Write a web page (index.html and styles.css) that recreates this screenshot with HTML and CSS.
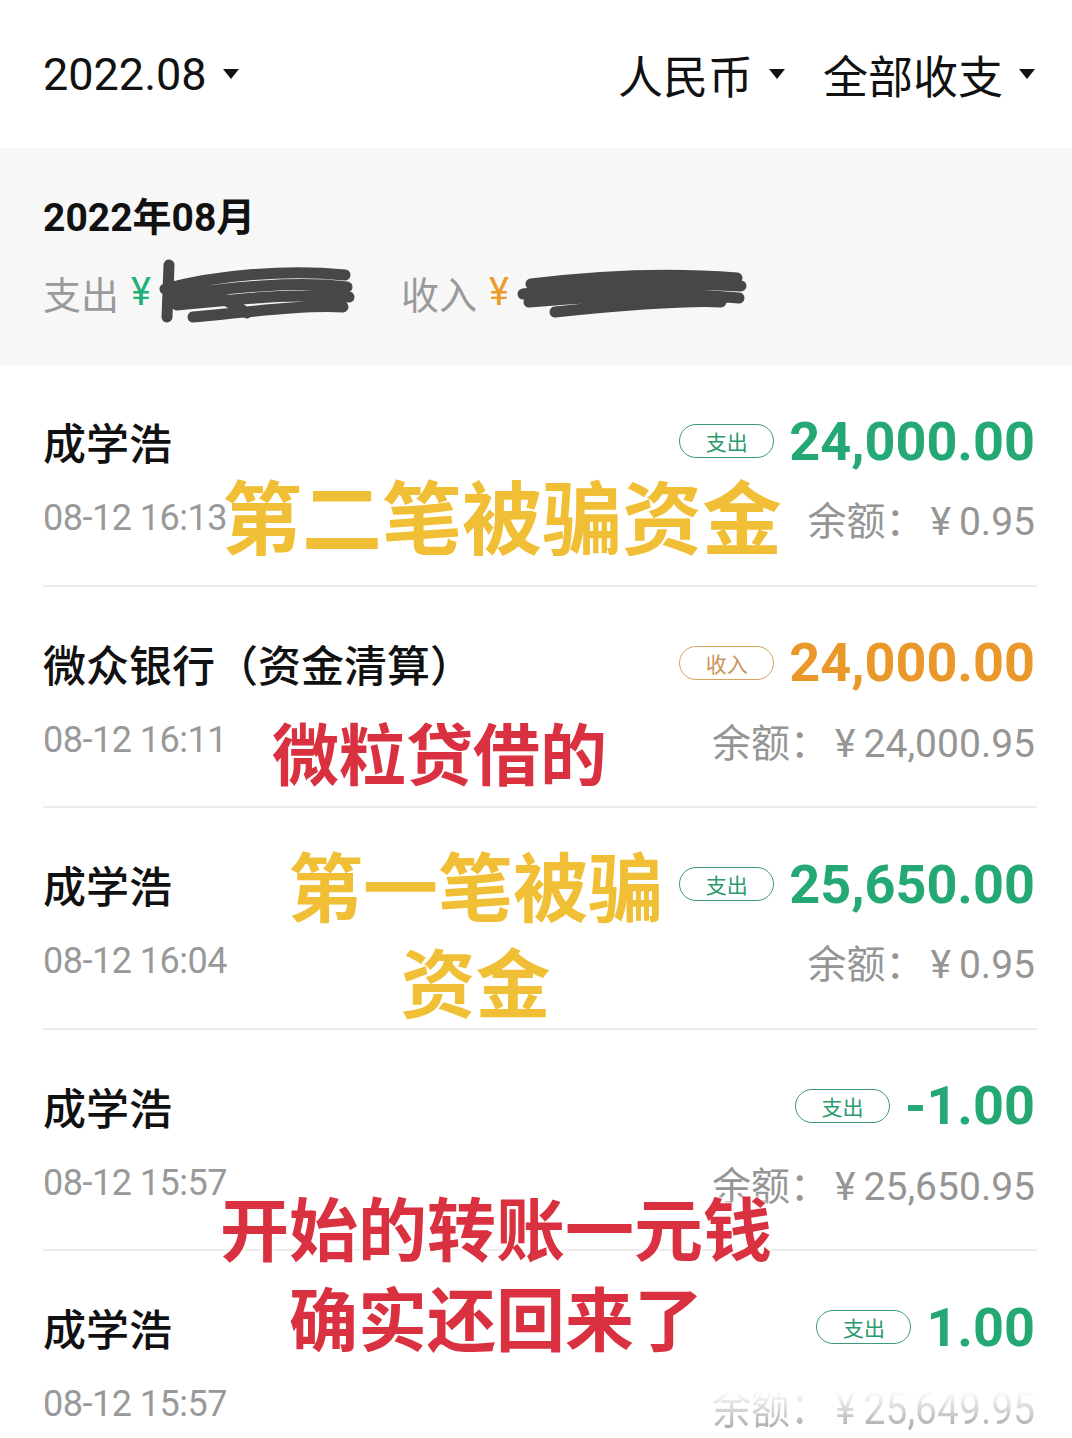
FILE: index.html
```html
<!DOCTYPE html>
<html lang="zh-CN">
<head>
    <meta charset="UTF-8">
    <meta name="viewport" content="width=device-width, initial-scale=1.0">
    <title>账单</title>
    <link rel="stylesheet" href="styles.css">
</head>
<body>

    <div class="topbar">
        <div class="pick">2022.08 <span class="caret"></span></div>
        <div class="filters">
            <div class="pick">人民币 <span class="caret"></span></div>
            <div class="pick">全部收支 <span class="caret"></span></div>
        </div>
    </div>

    <div class="month">
        <div class="month-title">2022年08月</div>
        <div class="month-sum">
            <span class="sum-label">支出</span>
            <span class="yen out">¥</span>
            <svg class="scribble" width="200" height="66" viewBox="0 0 200 66">
                <path d="M12 6 L10 58 M8 30 C60 16 130 10 188 16 M14 38 C70 28 140 22 190 28 M20 46 C80 40 140 34 192 38 M36 58 C100 52 150 46 186 48 M50 30 L90 54" fill="none" stroke="#474747" stroke-width="11" stroke-linecap="round"/>
            </svg>
            <span class="sum-label gap">收入</span>
            <span class="yen in">¥</span>
            <svg class="scribble" width="232" height="60" viewBox="0 0 232 60">
                <path d="M16 22 C80 14 150 10 222 16 M8 32 C80 24 160 20 226 24 M14 40 C90 34 160 30 224 36 M40 50 C100 44 170 38 206 40" fill="none" stroke="#474747" stroke-width="11" stroke-linecap="round"/>
            </svg>
        </div>
    </div>

    <div class="list">
        <div class="row">
            <div class="line">
                <span class="name">成学浩</span>
                <span class="money"><span class="tag out">支出</span><span class="amount out">24,000.00</span></span>
            </div>
            <div class="line">
                <span class="time">08-12 16:13</span>
                <span class="balance">余额：<span class="cur">¥</span>0.95</span>
            </div>
        </div>
        <div class="row">
            <div class="line">
                <span class="name">微众银行（资金清算）</span>
                <span class="money"><span class="tag in">收入</span><span class="amount in">24,000.00</span></span>
            </div>
            <div class="line">
                <span class="time">08-12 16:11</span>
                <span class="balance">余额：<span class="cur">¥</span>24,000.95</span>
            </div>
        </div>
        <div class="row">
            <div class="line">
                <span class="name">成学浩</span>
                <span class="money"><span class="tag out">支出</span><span class="amount out">25,650.00</span></span>
            </div>
            <div class="line">
                <span class="time">08-12 16:04</span>
                <span class="balance">余额：<span class="cur">¥</span>0.95</span>
            </div>
        </div>
        <div class="row">
            <div class="line">
                <span class="name">成学浩</span>
                <span class="money"><span class="tag out">支出</span><span class="amount out">-1.00</span></span>
            </div>
            <div class="line">
                <span class="time">08-12 15:57</span>
                <span class="balance">余额：<span class="cur">¥</span>25,650.95</span>
            </div>
        </div>
        <div class="row last">
            <div class="line">
                <span class="name">成学浩</span>
                <span class="money"><span class="tag out">支出</span><span class="amount out">1.00</span></span>
            </div>
            <div class="line">
                <span class="time">08-12 15:57</span>
                <span class="balance smear">余额：<span class="cur">¥</span>25,649.95</span>
            </div>
        </div>

        <!-- captions written over the screenshot -->
        <div class="note yellow note-1">第二笔被骗资金</div>
        <div class="note red note-2">微粒贷借的</div>
        <div class="note yellow note-3">第一笔被骗<br>资金</div>
        <div class="note red note-4">开始的转账一元钱<br>确实还回来了</div>
    </div>

</body>
</html>
```

FILE: styles.css
```css
body {
    margin: 0;
    background-color: #ffffff;
    font-family: Roboto, "Noto Sans CJK SC", sans-serif;
    color: #111111;
    overflow: hidden;
}
.topbar {
    height: 148px;
    padding: 0 37px 0 43px;
    display: flex;
    align-items: center;
    justify-content: space-between;
    box-sizing: border-box;
}
.filters {
    display: flex;
    gap: 38px;
}
.pick {
    font-size: 45px;
    display: flex;
    align-items: center;
    gap: 16px;
}
.caret {
    width: 0;
    height: 0;
    border-left: 8px solid transparent;
    border-right: 8px solid transparent;
    border-top: 10px solid #111111;
}
.month {
    background-color: #f7f7f7;
    height: 217px;
    padding: 0 43px;
    box-sizing: border-box;
    padding-top: 48px;
}
.month-title {
    font-size: 39px;
    font-weight: 700;
    line-height: 44px;
}
.month-sum {
    margin-top: 20px;
    display: flex;
    align-items: center;
    height: 64px;
}
.sum-label {
    font-size: 38px;
    color: #9a9a9a;
}
.sum-label.gap {
    margin-left: 44px;
}
.yen {
    font-size: 38px;
    margin-left: 12px;
}
.yen.out {
    color: #22b07a;
}
.yen.in {
    color: #eb9b2d;
}
.scribble {
    margin-left: 6px;
}
.list {
    position: relative;
}
.row {
    margin: 0 35px 0 43px;
    height: 221.5px;
    padding-top: 48px;
    box-sizing: border-box;
    border-bottom: 2px solid #ececec;
    display: flex;
    flex-direction: column;
    gap: 21px;
}
.row.last {
    border-bottom: none;
}
.line {
    height: 56px;
    display: flex;
    align-items: center;
    justify-content: space-between;
    padding-right: 2px;
}
.name {
    font-size: 43px;
    font-weight: 500;
    color: #111111;
}
.money {
    display: flex;
    align-items: center;
    gap: 15px;
}
.tag {
    height: 34px;
    width: 95px;
    box-sizing: border-box;
    border: 1.5px solid #2ba878;
    border-radius: 17px;
    display: flex;
    align-items: center;
    justify-content: center;
    font-size: 21px;
}
.tag.out {
    color: #2a9a6c;
    border-color: #3a9c74;
}
.tag.in {
    color: #c9955a;
    border-color: #d5a560;
}
.amount {
    font-size: 54px;
    font-weight: 700;
}
.amount.out {
    color: #24a874;
}
.amount.in {
    color: #ea982a;
}
.time {
    font-size: 36px;
    color: #999999;
    letter-spacing: -0.5px;
}
.balance {
    font-size: 39px;
    color: #959595;
}
.cur {
    margin: 0 8px 0 6px;
}
.balance.smear {
    background: linear-gradient(to bottom, rgba(255, 255, 255, 0) 30%, #9a9a9a 100%);
    -webkit-background-clip: text;
    background-clip: text;
    color: transparent;
    transform: scaleY(1.15);
}
.note {
    position: absolute;
    font-family: "Noto Sans CJK SC", sans-serif;
    font-weight: 700;
    text-align: center;
    white-space: nowrap;
    text-shadow: 0 0 2px #fff, 0 0 4px #fff, 0 0 6px #fff;
}
.yellow {
    color: #f1bf36;
}
.red {
    color: #d93140;
}
.note-1 {
    left: 222px;
    top: 108px;
    font-size: 80px;
    line-height: 80px;
}
.note-2 {
    left: 272px;
    top: 353px;
    font-size: 67px;
    line-height: 66px;
}
.note-3 {
    left: 288px;
    top: 471px;
    font-size: 75px;
    line-height: 96px;
}
.note-4 {
    left: 220px;
    top: 816px;
    font-size: 69px;
    line-height: 90px;
}
```
